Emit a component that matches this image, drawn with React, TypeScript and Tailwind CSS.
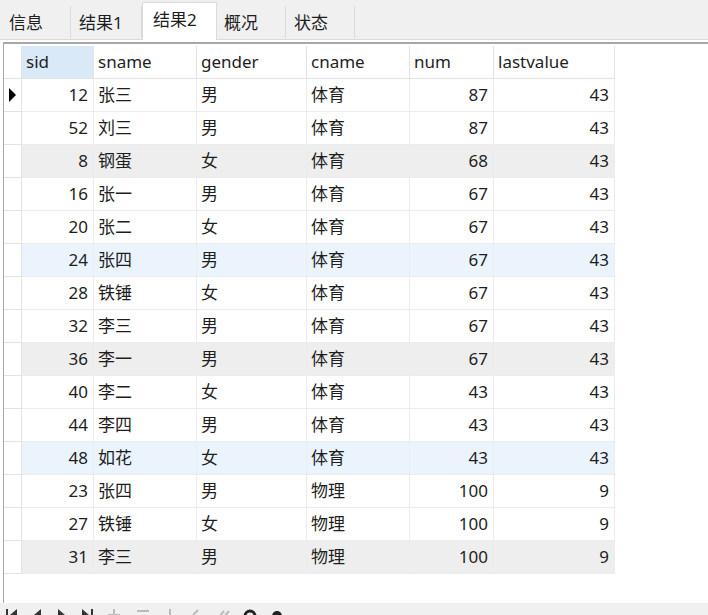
import React from "react";

// column widths include the 1px right border of each cell
const cols = [
  { key: "sid", label: "sid", w: "w-[72px]", right: true },
  { key: "sname", label: "sname", w: "w-[103px]", right: false },
  { key: "gender", label: "gender", w: "w-[110px]", right: false },
  { key: "cname", label: "cname", w: "w-[103px]", right: false },
  { key: "num", label: "num", w: "w-[84px]", right: true },
  { key: "lastvalue", label: "lastvalue", w: "w-[121px]", right: true },
];

type Row = {
  sid: number;
  sname: string;
  gender: string;
  cname: string;
  num: number;
  lastvalue: number;
  tone?: "gray" | "blue";
};

const rows: Row[] = [
  { sid: 12, sname: "张三", gender: "男", cname: "体育", num: 87, lastvalue: 43 },
  { sid: 52, sname: "刘三", gender: "男", cname: "体育", num: 87, lastvalue: 43 },
  { sid: 8, sname: "钢蛋", gender: "女", cname: "体育", num: 68, lastvalue: 43, tone: "gray" },
  { sid: 16, sname: "张一", gender: "男", cname: "体育", num: 67, lastvalue: 43 },
  { sid: 20, sname: "张二", gender: "女", cname: "体育", num: 67, lastvalue: 43 },
  { sid: 24, sname: "张四", gender: "男", cname: "体育", num: 67, lastvalue: 43, tone: "blue" },
  { sid: 28, sname: "铁锤", gender: "女", cname: "体育", num: 67, lastvalue: 43 },
  { sid: 32, sname: "李三", gender: "男", cname: "体育", num: 67, lastvalue: 43 },
  { sid: 36, sname: "李一", gender: "男", cname: "体育", num: 67, lastvalue: 43, tone: "gray" },
  { sid: 40, sname: "李二", gender: "女", cname: "体育", num: 43, lastvalue: 43 },
  { sid: 44, sname: "李四", gender: "男", cname: "体育", num: 43, lastvalue: 43 },
  { sid: 48, sname: "如花", gender: "女", cname: "体育", num: 43, lastvalue: 43, tone: "blue" },
  { sid: 23, sname: "张四", gender: "男", cname: "物理", num: 100, lastvalue: 9 },
  { sid: 27, sname: "铁锤", gender: "女", cname: "物理", num: 100, lastvalue: 9 },
  { sid: 31, sname: "李三", gender: "男", cname: "物理", num: 100, lastvalue: 9, tone: "gray" },
];

const tabs = [
  { label: "信息", w: "w-[71px]", pl: "pl-[9px]" },
  { label: "结果1", w: "w-[71px]", pl: "pl-[8px]" },
  { label: "结果2", w: "w-[75px]", pl: "pl-[10px]", active: true },
  { label: "概况", w: "w-[69px]", pl: "pl-[7px]" },
  { label: "状态", w: "w-[69px]", pl: "pl-[8px]" },
];

const App = () => {
  return (
    <div
      className="w-[708px] h-[615px] overflow-hidden bg-white text-[17px] text-[#1e1e1e] flex flex-col"
      style={{ fontFamily: '"Noto Sans", "Noto Sans CJK SC", sans-serif' }}
    >
      {/* TAB STRIP */}
      <div className="h-[40px] shrink-0 bg-[#f0f0f0] border-b border-[#dadada] flex items-end">
        {tabs.map((t) =>
          t.active ? (
            <div
              key={t.label}
              className={`${t.w} ${t.pl} h-[38px] -mb-px bg-white border-x border-t border-[#dadada] flex items-start pt-[3px] leading-[28px]`}
            >
              {t.label}
            </div>
          ) : (
            <div
              key={t.label}
              className={`${t.w} ${t.pl} h-[32px] mb-[1px] border-r border-[#dadada] bg-[#f0f0f0] flex items-center leading-none`}
            >
              {t.label}
            </div>
          )
        )}
      </div>

      {/* GRID */}
      <div className="mt-[2px] flex-1 flex flex-col">
        <div className="border-t-2 border-[#a8a8a8] ml-[3px] border-l border-l-[#a8a8a8] h-[561px] pt-[2px]">
          {/* header */}
          <div className="flex h-[33px]">
            <div className="w-[18px] border-r border-b border-[#e3e3e3] bg-white" />
            {cols.map((c) => (
              <div
                key={c.key}
                className={`${c.w} border-r border-b border-[#e3e3e3] flex items-center pl-[4px] ${
                  c.key === "sid" ? "bg-[#d9e9f8]" : "bg-white"
                }`}
              >
                {c.label}
              </div>
            ))}
          </div>
          {/* body */}
          {rows.map((r, i) => {
            const bg =
              r.tone === "gray" ? "bg-[#eeeeee]" : r.tone === "blue" ? "bg-[#ebf4fd]" : "bg-white";
            return (
              <div key={i} className="flex h-[33px]">
                <div className="w-[18px] border-r border-b border-[#e3e3e3] bg-white flex items-center justify-center">
                  {i === 0 && (
                    <svg width="9" height="14" viewBox="0 0 9 14">
                      <polygon points="1,0 8,7 1,14" fill="#000" />
                    </svg>
                  )}
                </div>
                {cols.map((c) => (
                  <div
                    key={c.key}
                    className={`${c.w} ${bg} border-r border-b border-[#ececec] flex items-center px-[4px] ${
                      c.right ? "justify-end pr-[5px]" : ""
                    }`}
                  >
                    {String(r[c.key as keyof Row])}
                  </div>
                ))}
              </div>
            );
          })}
        </div>

        {/* BOTTOM TOOLBAR (mostly cut off) */}
        <div className="h-[14px] bg-[#f0f0f0] flex items-start gap-[13px] pl-[6px] pt-[6px] text-[#222]">
          <svg width="12" height="12" viewBox="0 0 12 12"><rect x="0" y="0" width="2" height="12" fill="#333" /><polygon points="11,0 4,6 11,12" fill="#333" /></svg>
          <svg width="12" height="12" viewBox="0 0 12 12"><polygon points="10,0 3,6 10,12" fill="#333" /></svg>
          <svg width="12" height="12" viewBox="0 0 12 12"><polygon points="2,0 9,6 2,12" fill="#333" /></svg>
          <svg width="12" height="12" viewBox="0 0 12 12"><polygon points="1,0 8,6 1,12" fill="#333" /><rect x="10" y="0" width="2" height="12" fill="#333" /></svg>
          <svg width="16" height="12" viewBox="0 0 16 12"><path d="M2 6h12M8 0v12" stroke="#bbb" strokeWidth="2" /></svg>
          <svg width="16" height="12" viewBox="0 0 16 12"><path d="M2 2h12" stroke="#bbb" strokeWidth="2" /></svg>
          <svg width="12" height="12" viewBox="0 0 12 12"><path d="M6 0v12" stroke="#bbb" strokeWidth="2" /></svg>
          <svg width="14" height="12" viewBox="0 0 14 12"><path d="M4 6l5-5" stroke="#bbb" strokeWidth="2" /></svg>
          <svg width="14" height="12" viewBox="0 0 14 12"><path d="M3 8l5-6M8 8l5-6" stroke="#bbb" strokeWidth="2" /></svg>
          <svg width="14" height="12" viewBox="0 0 14 12"><circle cx="7" cy="7" r="5" stroke="#222" strokeWidth="3" fill="none" /></svg>
          <svg width="14" height="12" viewBox="0 0 14 12"><circle cx="7" cy="7" r="5" fill="#222" /></svg>
        </div>
      </div>
    </div>
  );
};

export default App;
